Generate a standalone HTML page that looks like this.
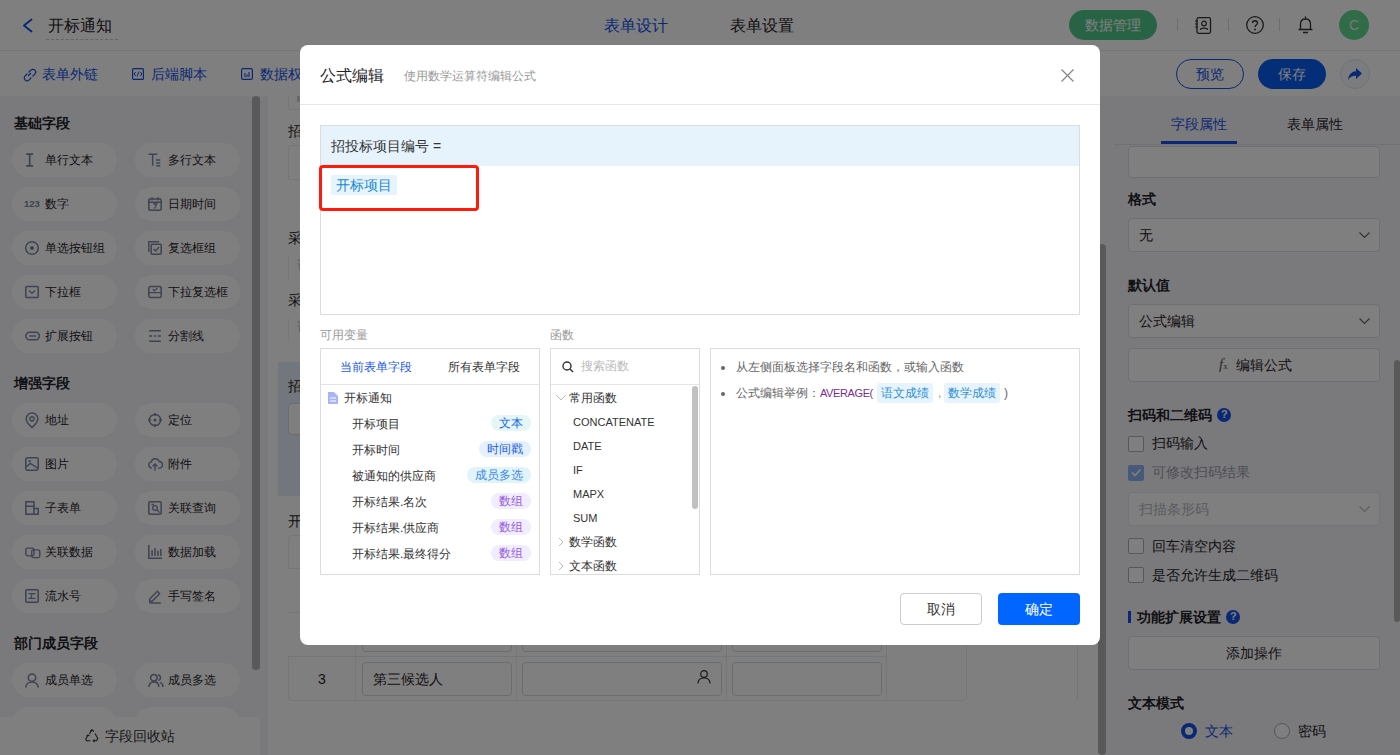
<!DOCTYPE html>
<html><head><meta charset="utf-8">
<style>
*{box-sizing:border-box;margin:0;padding:0}
html,body{width:1400px;height:755px;overflow:hidden;background:#fff;font-family:"Liberation Sans",sans-serif;color:#1f2329}
.a{position:absolute}
.t{position:absolute;white-space:nowrap;line-height:1}
svg{position:absolute;overflow:visible}
/* page */
#hdr{left:0;top:0;width:1400px;height:51px;background:#fff;border-bottom:1px solid #ececec}
#tb{left:0;top:51px;width:1400px;height:45px;background:#fff}
#lp{left:0;top:96px;width:268px;height:659px;background:#f4f5f8}
#ctr{left:268px;top:96px;width:832px;height:659px;background:#fff}
#rp{left:1100px;top:96px;width:300px;height:659px;background:#f4f5f8}
.pill{position:absolute;width:105px;height:34px;border-radius:17px;background:#fff}
.pill span{position:absolute;left:33px;top:10px;font-size:12px;line-height:14px;color:#1f2329;white-space:nowrap}
.sec{position:absolute;left:14px;font-size:14px;font-weight:bold;line-height:14px;color:#1f2329}
.inp{position:absolute;border:1px solid #dcdfe6;border-radius:4px;background:#fff}
.mask{z-index:5;left:0;top:0;width:1400px;height:755px;background:rgba(0,0,0,.5)}
/* modal */
#modal{z-index:6;left:300px;top:45px;width:800px;height:600px;background:#fff;border-radius:8px}
.bx{position:absolute;border:1px solid #dcdcdc;background:#fff}
.tag{position:absolute;height:16px;border-radius:8px;font-size:12px;line-height:16px;padding:0 8px;white-space:nowrap}
.vi{position:absolute;left:52px;font-size:12px;line-height:14px;color:#333;white-space:nowrap}
.fi{position:absolute;font-size:12px;line-height:14px;color:#333;white-space:nowrap}
</style></head><body>
<!-- ============ PAGE ============ -->
<div id="hdr" class="a"></div>
<!-- header content -->
<svg style="left:22px;top:18px" width="11" height="15"><path d="M9.5 1.5L2 7.5L9.5 13.5" stroke="#1450e6" stroke-width="2" fill="none" stroke-linecap="round" stroke-linejoin="round"/></svg>
<div class="t" style="left:48px;top:18px;font-size:16px;color:#1f2329">开标通知</div>
<div class="a" style="left:46px;top:39px;width:72px;height:0;border-top:1px dashed #c8c8c8"></div>
<div class="t" style="left:604px;top:18px;font-size:16px;color:#1450e6">表单设计</div>
<div class="t" style="left:730px;top:18px;font-size:16px;color:#1f2329">表单设置</div>
<div class="a" style="left:1069px;top:10px;width:88px;height:30px;border-radius:15px;background:#52c78a"></div>
<div class="t" style="left:1085px;top:18px;font-size:14px;color:#fff">数据管理</div>
<div class="a" style="left:1177px;top:18px;width:1px;height:13px;background:#ddd"></div>
<div class="a" style="left:1228px;top:18px;width:1px;height:13px;background:#ddd"></div>
<div class="a" style="left:1279px;top:18px;width:1px;height:13px;background:#ddd"></div>
<svg style="left:1194px;top:17px" width="18" height="17"><rect x="3" y="0.7" width="13.5" height="15.6" rx="1.5" stroke="#333" stroke-width="1.3" fill="none"/><circle cx="10" cy="6.5" r="2.3" stroke="#333" stroke-width="1.2" fill="none"/><path d="M6.3 13C6.8 10.5 13.2 10.5 13.7 13" stroke="#333" stroke-width="1.2" fill="none"/><path d="M1 4H4M1 7H4M1 10H4" stroke="#333" stroke-width="1.2"/></svg>
<svg style="left:1246px;top:16px" width="18" height="18"><circle cx="9" cy="9" r="8.3" stroke="#333" stroke-width="1.3" fill="none"/><path d="M6.5 7C6.5 4 11.5 4 11.5 7C11.5 9 9 9 9 11" stroke="#333" stroke-width="1.3" fill="none"/><circle cx="9" cy="13.5" r="0.9" fill="#333"/></svg>
<svg style="left:1298px;top:16px" width="15" height="18"><path d="M7.5 1V2.5M2.5 13V8C2.5 5 4.5 3 7.5 3C10.5 3 12.5 5 12.5 8V13M1 13.5H14M5.5 16.5H9.5" stroke="#333" stroke-width="1.3" fill="none" stroke-linecap="round"/></svg>
<div class="a" style="left:1339px;top:10px;width:30px;height:30px;border-radius:15px;background:#60d890"></div>
<div class="t" style="left:1349px;top:18px;font-size:14px;color:#e8f4ec">C</div>
<div id="tb" class="a"></div>
<svg style="left:23px;top:68px" width="13" height="13"><path d="M5.5 7.5L7.5 5.5M4 6L2.2 7.8C1 9 1 10.8 2.2 12S5 13 6.2 11.8L8 10M6 4L7.8 2.2C9 1 10.8 1 12 2.2S13 5 11.8 6.2L10 8" stroke="#1450e6" stroke-width="1.2" fill="none" stroke-linecap="round"/></svg>
<div class="t" style="left:42px;top:67px;font-size:14px;color:#1450e6">表单外链</div>
<svg style="left:132px;top:68px" width="12" height="12"><rect x="0.6" y="0.6" width="10.8" height="10.8" rx="1" stroke="#1450e6" stroke-width="1.2" fill="none"/><path d="M3.5 4L2.2 6L3.5 8M8.5 4L9.8 6L8.5 8M7 3.5L5 8.5" stroke="#1450e6" stroke-width="1" fill="none"/></svg>
<div class="t" style="left:151px;top:67px;font-size:14px;color:#1450e6">后端脚本</div>
<svg style="left:241px;top:68px" width="12" height="12"><rect x="0.6" y="0.6" width="10.8" height="10.8" rx="1.5" stroke="#1450e6" stroke-width="1.2" fill="none"/><path d="M4 5V9M6 6.5V9M8 4V9" stroke="#1450e6" stroke-width="1.1"/></svg>
<div class="t" style="left:260px;top:67px;font-size:14px;color:#1450e6">数据权限</div>
<div class="a" style="left:1176px;top:59px;width:68px;height:30px;border:1px solid #1450e6;border-radius:15px;background:#fff"></div>
<div class="t" style="left:1196px;top:67px;font-size:14px;color:#1450e6">预览</div>
<div class="a" style="left:1258px;top:59px;width:68px;height:30px;border-radius:15px;background:#0a5cf0"></div>
<div class="t" style="left:1278px;top:67px;font-size:14px;color:#fff">保存</div>
<div class="a" style="left:1340px;top:59px;width:30px;height:30px;border-radius:15px;border:1px solid #dde3ee;background:#f7f9fc"></div>
<svg style="left:1347px;top:67px" width="16" height="14"><path d="M9 1L15 6.5L9 12V8.8C5 8.8 2.8 10 1 13C1.5 8 4 4.8 9 4.3Z" fill="#1450e6"/></svg>
<div id="lp" class="a"></div>
<div class="sec" style="top:116px">基础字段</div>
<div class="pill" style="left:12px;top:143px"><span>单行文本</span></div>
<svg style="left:25px;top:153px" width="14" height="14" viewBox="0 0 12 12"><path d="M1 1H7M1 11H7M4 1V11" stroke="#7a86a3" stroke-width="1.4" fill="none"/></svg>
<div class="pill" style="left:135px;top:143px"><span>多行文本</span></div>
<svg style="left:148px;top:153px" width="14" height="14" viewBox="0 0 12 12"><path d="M0.5 1H8M4 1V11M7 6H10.5M7 8.5H10.5M7 11H10.5" stroke="#7a86a3" stroke-width="1.3" fill="none"/></svg>
<div class="pill" style="left:12px;top:187px"><span>数字</span></div>
<div class="t" style="left:24px;top:199px;font-size:9.5px;font-weight:bold;color:#7a86a3">123</div>
<div class="pill" style="left:135px;top:187px"><span>日期时间</span></div>
<svg style="left:148px;top:197px" width="14" height="14" viewBox="0 0 12 12"><rect x="0.7" y="1.7" width="10.6" height="9.6" rx="1" stroke="#7a86a3" stroke-width="1.3" fill="none"/><path d="M3.5 0V3M8.5 0V3M0.7 4.5H11.3M4.5 6H7.5L5.5 10" stroke="#7a86a3" stroke-width="1.1" fill="none"/></svg>
<div class="pill" style="left:12px;top:231px"><span>单选按钮组</span></div>
<svg style="left:25px;top:241px" width="14" height="14" viewBox="0 0 12 12"><circle cx="6" cy="6" r="5.4" stroke="#7a86a3" stroke-width="1.3" fill="none"/><circle cx="6" cy="6" r="1.8" fill="#7a86a3"/></svg>
<div class="pill" style="left:135px;top:231px"><span>复选框组</span></div>
<svg style="left:148px;top:241px" width="14" height="14" viewBox="0 0 12 12"><path d="M0.7 9.5V0.7H9.5" stroke="#7a86a3" stroke-width="1.2" fill="none"/><rect x="2.7" y="2.7" width="8.6" height="8.6" rx="0.8" stroke="#7a86a3" stroke-width="1.3" fill="none"/><path d="M4.8 6.8L6.6 8.5L9.5 5" stroke="#7a86a3" stroke-width="1.2" fill="none"/></svg>
<div class="pill" style="left:12px;top:275px"><span>下拉框</span></div>
<svg style="left:25px;top:285px" width="14" height="14" viewBox="0 0 12 12"><rect x="0.7" y="1.2" width="10.6" height="9.6" rx="1" stroke="#7a86a3" stroke-width="1.3" fill="none"/><path d="M3.5 4.8L6 7.2L8.5 4.8" stroke="#7a86a3" stroke-width="1.2" fill="none"/></svg>
<div class="pill" style="left:135px;top:275px"><span>下拉复选框</span></div>
<svg style="left:148px;top:285px" width="14" height="14" viewBox="0 0 12 12"><rect x="0.7" y="1.2" width="10.6" height="9.6" rx="1.5" stroke="#7a86a3" stroke-width="1.3" fill="none"/><path d="M0.7 6.5H11.3M4 3.5L5.5 5L8 2.5" stroke="#7a86a3" stroke-width="1.1" fill="none"/></svg>
<div class="pill" style="left:12px;top:319px"><span>扩展按钮</span></div>
<svg style="left:25px;top:329px" width="14" height="14" viewBox="0 0 12 12"><rect x="0.7" y="2.7" width="11.6" height="6.6" rx="3.3" stroke="#7a86a3" stroke-width="1.3" fill="none"/><path d="M3.5 6H9.5" stroke="#7a86a3" stroke-width="1.2"/></svg>
<div class="pill" style="left:135px;top:319px"><span>分割线</span></div>
<svg style="left:148px;top:329px" width="14" height="14" viewBox="0 0 12 12"><path d="M1 1.5H11M1 6H3.5M5 6H7M8.5 6H11M1 10.5H11" stroke="#7a86a3" stroke-width="1.3" fill="none"/></svg>
<div class="sec" style="top:376px">增强字段</div>
<div class="pill" style="left:12px;top:403px"><span>地址</span></div>
<svg style="left:25px;top:413px" width="14" height="14" viewBox="0 0 12 12"><path d="M6 12.5C6 12.5 1 8 1 5A5 5 0 0 1 11 5C11 8 6 12.5 6 12.5Z" stroke="#7a86a3" stroke-width="1.3" fill="none"/><circle cx="6" cy="5" r="1.8" stroke="#7a86a3" stroke-width="1.2" fill="none"/></svg>
<div class="pill" style="left:135px;top:403px"><span>定位</span></div>
<svg style="left:148px;top:413px" width="14" height="14" viewBox="0 0 12 12"><circle cx="6" cy="6" r="4.8" stroke="#7a86a3" stroke-width="1.3" fill="none"/><circle cx="6" cy="6" r="1.3" fill="#7a86a3"/><path d="M6 0V2.5M6 9.5V12M0 6H2.5M9.5 6H12" stroke="#7a86a3" stroke-width="1.3"/></svg>
<div class="pill" style="left:12px;top:447px"><span>图片</span></div>
<svg style="left:25px;top:457px" width="14" height="14" viewBox="0 0 12 12"><rect x="0.7" y="0.7" width="10.6" height="10.6" rx="1.2" stroke="#7a86a3" stroke-width="1.3" fill="none"/><path d="M1 8.5L4.5 5.5L11 9.5" stroke="#7a86a3" stroke-width="1.1" fill="none"/><circle cx="4" cy="3.5" r="1" fill="#7a86a3"/></svg>
<div class="pill" style="left:135px;top:447px"><span>附件</span></div>
<svg style="left:148px;top:457px" width="14" height="14" viewBox="0 0 12 12"><path d="M3.5 9.5H3A2.7 2.7 0 0 1 2.8 4.2A3.5 3.5 0 0 1 9.5 3.8A2.7 2.7 0 0 1 9.5 9.5H8.5M6 11.5V6M4 8L6 6L8 8" stroke="#7a86a3" stroke-width="1.2" fill="none"/></svg>
<div class="pill" style="left:12px;top:491px"><span>子表单</span></div>
<svg style="left:25px;top:501px" width="14" height="14" viewBox="0 0 12 12"><rect x="0.7" y="0.7" width="7" height="10.6" stroke="#7a86a3" stroke-width="1.3" fill="none"/><path d="M0.7 4.5H7.7M7.7 6.5H11.3V11.3H7.7" stroke="#7a86a3" stroke-width="1.3" fill="none"/></svg>
<div class="pill" style="left:135px;top:491px"><span>关联查询</span></div>
<svg style="left:148px;top:501px" width="14" height="14" viewBox="0 0 12 12"><rect x="0.7" y="0.7" width="10.6" height="10.6" rx="1" stroke="#7a86a3" stroke-width="1.3" fill="none"/><circle cx="6" cy="6" r="2" stroke="#7a86a3" stroke-width="1.1" fill="none"/><path d="M7.5 7.5L10 10M3 3H5" stroke="#7a86a3" stroke-width="1.1"/></svg>
<div class="pill" style="left:12px;top:535px"><span>关联数据</span></div>
<svg style="left:25px;top:545px" width="14" height="14" viewBox="0 0 12 12"><rect x="0.7" y="2.7" width="7" height="6.6" rx="1.5" stroke="#7a86a3" stroke-width="1.2" fill="none"/><rect x="5.7" y="4.2" width="7" height="6.6" rx="1.5" stroke="#7a86a3" stroke-width="1.2" fill="none"/></svg>
<div class="pill" style="left:135px;top:535px"><span>数据加载</span></div>
<svg style="left:148px;top:545px" width="14" height="14" viewBox="0 0 12 12"><path d="M0.7 0V11.3H12M3.5 4.5V9.5M6 2.5V9.5M8.5 5V9.5M11 3.5V9.5" stroke="#7a86a3" stroke-width="1.3" fill="none"/></svg>
<div class="pill" style="left:12px;top:579px"><span>流水号</span></div>
<svg style="left:25px;top:589px" width="14" height="14" viewBox="0 0 12 12"><rect x="0.7" y="0.7" width="10.6" height="10.6" rx="1" stroke="#7a86a3" stroke-width="1.3" fill="none"/><path d="M3 4H9M3 8H9M6 4L5 8" stroke="#7a86a3" stroke-width="1.1" fill="none"/></svg>
<div class="pill" style="left:135px;top:579px"><span>手写签名</span></div>
<svg style="left:148px;top:589px" width="14" height="14" viewBox="0 0 12 12"><path d="M1.5 8.5L8 2L10 4L3.5 10.5H1.5Z M1 12H11" stroke="#7a86a3" stroke-width="1.2" fill="none"/></svg>
<div class="sec" style="top:636px">部门成员字段</div>
<div class="pill" style="left:12px;top:663px"><span>成员单选</span></div>
<svg style="left:25px;top:673px" width="14" height="14" viewBox="0 0 12 12"><circle cx="6" cy="4" r="3.2" stroke="#7a86a3" stroke-width="1.3" fill="none"/><path d="M0.7 12.5C0.7 9.5 3 7.8 6 7.8S11.3 9.5 11.3 12.5" stroke="#7a86a3" stroke-width="1.3" fill="none"/></svg>
<div class="pill" style="left:135px;top:663px"><span>成员多选</span></div>
<svg style="left:148px;top:673px" width="14" height="14" viewBox="0 0 12 12"><circle cx="5" cy="4" r="2.8" stroke="#7a86a3" stroke-width="1.3" fill="none"/><path d="M0.7 12C0.7 9.3 2.5 7.6 5 7.6S9.3 9.3 9.3 12M8.5 1.5A2.6 2.6 0 0 1 9 6.5M10.5 8C12 8.8 12.8 10 12.8 12" stroke="#7a86a3" stroke-width="1.3" fill="none"/></svg>
<div class="pill" style="left:12px;top:707px"><span></span></div>
<div class="pill" style="left:135px;top:707px"><span></span></div>
<div class="a" style="left:252px;top:96px;width:8px;height:574px;border-radius:4px;background:#b3b3b3"></div>
<div class="a" style="left:0;top:717px;width:260px;height:38px;background:#fff"></div>
<svg style="left:85px;top:729px" width="14" height="13"><path d="M5 2.5L7 0.8L9 2.5M7 0.8L4.5 5M10 4.5L12.8 9.5L11.5 11.8H8.5M9.5 10.5L8.3 11.8L9.5 13M5.5 11.8H1.5L0.8 10L3 6M1.5 7.5L3 6L4.5 7" stroke="#333" stroke-width="1.1" fill="none"/></svg>
<div class="t" style="left:105px;top:729px;font-size:14px;color:#333">字段回收站</div>
<div id="ctr" class="a"></div>
<div class="inp" style="left:288px;top:96px;width:789px;height:14px;border-color:#eceef1;border-top:none;border-radius:0 0 2px 2px"></div>
<div class="a" style="left:297px;top:96px;width:3px;height:6px;background:#d0d3da"></div>
<div class="t" style="left:288px;top:124px;font-size:14px;color:#1f2329">招投标项目编号</div>
<div class="inp" style="left:288px;top:145px;width:789px;height:35px;border-color:#eceef1;border-radius:2px"></div>
<div class="t" style="left:288px;top:231px;font-size:14px;color:#1f2329">采购方式</div>
<div class="inp" style="left:288px;top:256px;width:789px;height:24px;border:none;border-left:1px solid #f0f1f4;border-radius:0"></div>
<div class="t" style="left:297px;top:258px;font-size:14px;color:#b8bcc4">请选择</div>
<div class="t" style="left:288px;top:293px;font-size:14px;color:#1f2329">采购类型</div>
<div class="inp" style="left:288px;top:318px;width:789px;height:24px;border:none;border-left:1px solid #f0f1f4;border-radius:0"></div>
<div class="t" style="left:297px;top:320px;font-size:14px;color:#b8bcc4">请选择</div>
<div class="a" style="left:278px;top:362px;width:810px;height:134px;background:#e4ecfb"></div>
<div class="t" style="left:288px;top:379px;font-size:14px;color:#1f2329">招标项目</div>
<div class="inp" style="left:288px;top:403px;width:789px;height:32px;border-color:#d5d9e0"></div>
<div class="t" style="left:288px;top:514px;font-size:14px;color:#1f2329">开标结果</div>
<!-- table -->
<div class="a" style="left:288px;top:535px;width:679px;height:166px;border:1px solid #eaecef;border-radius:4px"></div>
<div class="a" style="left:288px;top:568px;width:598px;height:1px;background:#eaecef"></div>
<div class="a" style="left:288px;top:612px;width:598px;height:1px;background:#eaecef"></div>
<div class="a" style="left:288px;top:656px;width:598px;height:1px;background:#eaecef"></div>
<div class="a" style="left:288px;top:569px;width:1px;height:43px;background:#fff"></div>
<div class="a" style="left:288px;top:613px;width:1px;height:43px;background:#fff"></div>
<div class="a" style="left:355px;top:535px;width:1px;height:166px;background:#eaecef"></div>
<div class="a" style="left:516px;top:535px;width:1px;height:166px;background:#eaecef"></div>
<div class="a" style="left:726px;top:535px;width:1px;height:166px;background:#eaecef"></div>
<div class="a" style="left:886px;top:535px;width:1px;height:166px;background:#eaecef"></div>
<div class="inp" style="left:362px;top:618px;width:150px;height:34px;border-color:#d5d9e0"></div>
<div class="inp" style="left:522px;top:618px;width:200px;height:34px;border-color:#d5d9e0"></div>
<div class="inp" style="left:732px;top:618px;width:150px;height:34px;border-color:#d5d9e0"></div>
<div class="t" style="left:318px;top:672px;font-size:14px;color:#1f2329">3</div>
<div class="inp" style="left:362px;top:662px;width:150px;height:34px;border-color:#d5d9e0"></div>
<div class="t" style="left:373px;top:672px;font-size:14px;color:#1f2329">第三候选人</div>
<div class="inp" style="left:522px;top:662px;width:200px;height:34px;border-color:#d5d9e0"></div>
<svg style="left:697px;top:670px" width="14" height="14"><circle cx="7" cy="4" r="3.3" stroke="#333" stroke-width="1.2" fill="none"/><path d="M1 13.5C1 10 3.5 8 7 8S13 10 13 13.5" stroke="#333" stroke-width="1.2" fill="none"/></svg>
<div class="inp" style="left:732px;top:662px;width:150px;height:34px;border-color:#d5d9e0"></div>
<div class="a" style="left:1077px;top:96px;width:1px;height:604px;background:#e8eaee"></div>
<div class="a" style="left:1098px;top:244px;width:8px;height:511px;border-radius:4px;background:#b3b3b3;z-index:2"></div>

<div id="rp" class="a"></div>
<div class="t" style="left:1171px;top:117px;font-size:14px;color:#1450e6">字段属性</div>
<div class="t" style="left:1287px;top:117px;font-size:14px;color:#1f2329">表单属性</div>
<div class="a" style="left:1114px;top:144px;width:286px;height:1px;background:#dfe2e8"></div>
<div class="a" style="left:1161px;top:141px;width:76px;height:3px;background:#1450e6"></div>
<div class="inp" style="left:1128px;top:146px;width:252px;height:32px;border-color:#dcdfe6"></div>
<div class="t" style="left:1128px;top:192px;font-size:14px;font-weight:bold;color:#1f2329">格式</div>
<div class="inp" style="left:1128px;top:218px;width:252px;height:34px"></div>
<div class="t" style="left:1139px;top:228px;font-size:14px;color:#1f2329">无</div>
<svg style="left:1359px;top:232px" width="11" height="6"><path d="M0.5 0.5L5.5 5.5L10.5 0.5" stroke="#666" stroke-width="1.2" fill="none"/></svg>
<div class="t" style="left:1128px;top:278px;font-size:14px;font-weight:bold;color:#1f2329">默认值</div>
<div class="inp" style="left:1128px;top:304px;width:252px;height:34px"></div>
<div class="t" style="left:1139px;top:314px;font-size:14px;color:#1f2329">公式编辑</div>
<svg style="left:1359px;top:318px" width="11" height="6"><path d="M0.5 0.5L5.5 5.5L10.5 0.5" stroke="#666" stroke-width="1.2" fill="none"/></svg>
<div class="inp" style="left:1128px;top:348px;width:252px;height:34px"></div>
<div class="t" style="left:1219px;top:357px;font-size:15px;font-style:italic;font-family:'Liberation Serif',serif;color:#555">f<span style="font-size:9px;font-style:normal">x</span></div>
<div class="t" style="left:1236px;top:358px;font-size:14px;color:#1f2329">编辑公式</div>
<div class="t" style="left:1128px;top:408px;font-size:14px;font-weight:bold;color:#1f2329">扫码和二维码</div>
<div class="a" style="left:1217px;top:408px;width:14px;height:14px;border-radius:7px;background:#1450e6"></div><div class="t" style="left:1221px;top:409px;font-size:11px;font-weight:bold;color:#fff">?</div>
<div class="a" style="left:1128px;top:436px;width:16px;height:16px;border-radius:2px;border:1px solid #a9aebb;background:#fff"></div>
<div class="t" style="left:1152px;top:436px;font-size:14px;color:#1f2329">扫码输入</div>
<div class="a" style="left:1128px;top:465px;width:16px;height:16px;border-radius:2px;background:#8fb2f0"></div><svg style="left:1131px;top:468px" width="10" height="9"><path d="M1 4.5L4 7.5L9.5 1.5" stroke="#fff" stroke-width="1.6" fill="none"/></svg>
<div class="t" style="left:1152px;top:465px;font-size:14px;color:#9aa0aa">可修改扫码结果</div>
<div class="inp" style="left:1128px;top:492px;width:252px;height:34px;border-color:#e6e8ec;background:#fff"></div>
<div class="t" style="left:1139px;top:502px;font-size:14px;color:#b3b8c0">扫描条形码</div>
<svg style="left:1359px;top:506px" width="11" height="6"><path d="M0.5 0.5L5.5 5.5L10.5 0.5" stroke="#bbb" stroke-width="1.2" fill="none"/></svg>
<div class="a" style="left:1128px;top:538px;width:16px;height:16px;border-radius:2px;border:1px solid #a9aebb;background:#fff"></div>
<div class="t" style="left:1152px;top:539px;font-size:14px;color:#1f2329">回车清空内容</div>
<div class="a" style="left:1128px;top:567px;width:16px;height:16px;border-radius:2px;border:1px solid #a9aebb;background:#fff"></div>
<div class="t" style="left:1152px;top:568px;font-size:14px;color:#1f2329">是否允许生成二维码</div>
<div class="a" style="left:1128px;top:611px;width:3px;height:12px;background:#1450e6"></div>
<div class="t" style="left:1137px;top:610px;font-size:14px;font-weight:bold;color:#1f2329">功能扩展设置</div>
<div class="a" style="left:1226px;top:610px;width:14px;height:14px;border-radius:7px;background:#1450e6"></div><div class="t" style="left:1230px;top:611px;font-size:11px;font-weight:bold;color:#fff">?</div>
<div class="inp" style="left:1128px;top:636px;width:252px;height:34px"></div>
<div class="t" style="left:1226px;top:646px;font-size:14px;color:#1f2329">添加操作</div>
<div class="t" style="left:1128px;top:696px;font-size:14px;font-weight:bold;color:#1f2329">文本模式</div>
<div class="a" style="left:1181px;top:723px;width:16px;height:16px;border-radius:8px;border:4.5px solid #1450e6;background:#fff"></div>
<div class="t" style="left:1205px;top:724px;font-size:14px;color:#1450e6">文本</div>
<div class="a" style="left:1274px;top:723px;width:16px;height:16px;border-radius:8px;border:1px solid #a9aebb;background:#fff"></div>
<div class="t" style="left:1298px;top:724px;font-size:14px;color:#1f2329">密码</div>
<div class="a" style="left:1394px;top:360px;width:6px;height:262px;border-radius:3px;background:#b3b3b3"></div>


<!-- mask -->
<div class="a mask"></div>

<!-- ============ MODAL ============ -->
<div id="modal" class="a">
  <div class="t" style="left:20px;top:23px;font-size:16px;color:#1f2329">公式编辑</div>
  <div class="t" style="left:104px;top:25px;font-size:12px;color:#999">使用数学运算符编辑公式</div>
  <svg style="left:761px;top:24px" width="13" height="13"><path d="M0.5 0.5L12.5 12.5M12.5 0.5L0.5 12.5" stroke="#888" stroke-width="1.3" fill="none"/></svg>
  <div class="a" style="left:0;top:59px;width:800px;height:1px;background:#e8e8e8"></div>
  <!-- formula box -->
  <div class="bx" style="left:20px;top:80px;width:760px;height:190px;border-color:#dcdcdc"></div>
  <div class="a" style="left:21px;top:81px;width:758px;height:40px;background:#e6f3fd"></div>
  <div class="t" style="left:31px;top:94px;font-size:14px;color:#333">招投标项目编号 =</div>
  <div class="a" style="left:19px;top:120px;width:160px;height:46px;border:3px solid #ff1a0a;border-radius:4px"></div>
  <div class="a" style="left:31px;top:130px;width:66px;height:20px;background:#e8f4fd;border-radius:2px"></div>
  <div class="t" style="left:36px;top:133px;font-size:14px;color:#1688d8">开标项目</div>
  <!-- labels -->
  <div class="t" style="left:20px;top:284px;font-size:12px;color:#999">可用变量</div>
  <div class="t" style="left:250px;top:284px;font-size:12px;color:#999">函数</div>
  <!-- variables panel -->
  <div class="bx" style="left:20px;top:303px;width:220px;height:227px"></div>
  <div class="a" style="left:21px;top:339px;width:218px;height:1px;background:#e4e4e4"></div>
  <div class="t" style="left:40px;top:316px;font-size:12px;color:#2357f5">当前表单字段</div>
  <div class="t" style="left:148px;top:316px;font-size:12px;color:#333">所有表单字段</div>
  <svg style="left:28px;top:347px" width="10" height="12"><path d="M0 0H6L10 4V12H0Z" fill="#a8b4f8"/><path d="M2 6H8M2 9H8" stroke="#fff" stroke-width="1"/></svg>
  <div class="t" style="left:44px;top:347px;font-size:12px;color:#333">开标通知</div>
  <div class="vi" style="top:372px">开标项目</div>
  <div class="vi" style="top:398px">开标时间</div>
  <div class="vi" style="top:424px">被通知的供应商</div>
  <div class="vi" style="top:450px">开标结果.名次</div>
  <div class="vi" style="top:476px">开标结果.供应商</div>
  <div class="vi" style="top:502px">开标结果.最终得分</div>
  <div class="tag" style="right:569px;top:370px;background:#e5f6f6;color:#1565f0">文本</div>
  <div class="tag" style="right:569px;top:396px;background:#e6f0fd;color:#1860e8">时间戳</div>
  <div class="tag" style="right:569px;top:422px;background:#e1f3fb;color:#3a8ae6">成员多选</div>
  <div class="tag" style="right:569px;top:448px;background:#f1ecfe;color:#9560e0">数组</div>
  <div class="tag" style="right:569px;top:474px;background:#f1ecfe;color:#9560e0">数组</div>
  <div class="tag" style="right:569px;top:500px;background:#f1ecfe;color:#9560e0">数组</div>
  <!-- functions panel -->
  <div class="bx" style="left:250px;top:303px;width:150px;height:227px;overflow:hidden"></div>
  <div class="a" style="left:251px;top:339px;width:148px;height:1px;background:#e4e4e4"></div>
  <svg style="left:262px;top:316px" width="12" height="12"><circle cx="5" cy="5" r="4" stroke="#333" stroke-width="1.4" fill="none"/><path d="M8 8L11 11" stroke="#333" stroke-width="1.4"/></svg>
  <div class="t" style="left:281px;top:315px;font-size:12px;color:#bbb">搜索函数</div>
  <svg style="left:256px;top:350px" width="10" height="6"><path d="M0 0L5 5L10 0" stroke="#bbb" stroke-width="1" fill="none"/></svg>
  <div class="fi" style="left:269px;top:346px">常用函数</div>
  <div class="fi" style="left:273px;top:370px;font-size:11px;letter-spacing:0px">CONCATENATE</div>
  <div class="fi" style="left:273px;top:394px;font-size:11px;letter-spacing:0px">DATE</div>
  <div class="fi" style="left:273px;top:418px;font-size:11px;letter-spacing:0px">IF</div>
  <div class="fi" style="left:273px;top:442px;font-size:11px;letter-spacing:0px">MAPX</div>
  <div class="fi" style="left:273px;top:466px;font-size:11px;letter-spacing:0px">SUM</div>
  <svg style="left:259px;top:493px" width="4" height="8"><path d="M0 0L4 4L0 8" stroke="#bbb" stroke-width="1" fill="none"/></svg>
  <div class="fi" style="left:269px;top:490px">数学函数</div>
  <svg style="left:259px;top:517px" width="4" height="8"><path d="M0 0L4 4L0 8" stroke="#bbb" stroke-width="1" fill="none"/></svg>
  <div class="fi" style="left:269px;top:514px">文本函数</div>
  <div class="a" style="left:392px;top:341px;width:6px;height:123px;border-radius:3px;background:#c1c1c1"></div>
  <!-- info panel -->
  <div class="bx" style="left:410px;top:303px;width:370px;height:227px"></div>
  <div class="a" style="left:421px;top:321px;width:4px;height:4px;border-radius:2px;background:#666"></div>
  <div class="t" style="left:436px;top:316px;font-size:12px;color:#666">从左侧面板选择字段名和函数，或输入函数</div>
  <div class="a" style="left:421px;top:347px;width:4px;height:4px;border-radius:2px;background:#666"></div>
  <div class="t" style="left:436px;top:342px;font-size:12px;color:#666">公式编辑举例：<span style="color:#7b2d8e;font-size:11px;letter-spacing:-0.4px">AVERAGE(</span></div>
  <div class="a" style="left:577px;top:338px;width:56px;height:20px;background:#e8f4fd;border-radius:3px"></div>
  <div class="t" style="left:581px;top:342px;font-size:12px;color:#2c8fd6">语文成绩</div>
  <div class="t" style="left:638px;top:342px;font-size:12px;color:#999">,</div>
  <div class="a" style="left:644px;top:338px;width:56px;height:20px;background:#e8f4fd;border-radius:3px"></div>
  <div class="t" style="left:648px;top:342px;font-size:12px;color:#2c8fd6">数学成绩</div>
  <div class="t" style="left:704px;top:342px;font-size:12px;color:#666">)</div>
  <!-- buttons -->
  <div class="a" style="left:600px;top:548px;width:82px;height:32px;border:1px solid #ccc;border-radius:4px;background:#fff"></div>
  <div class="t" style="left:627px;top:557px;font-size:14px;color:#333">取消</div>
  <div class="a" style="left:698px;top:548px;width:82px;height:32px;border-radius:4px;background:#0066ff"></div>
  <div class="t" style="left:725px;top:557px;font-size:14px;color:#fff">确定</div>
</div>
</body></html>
